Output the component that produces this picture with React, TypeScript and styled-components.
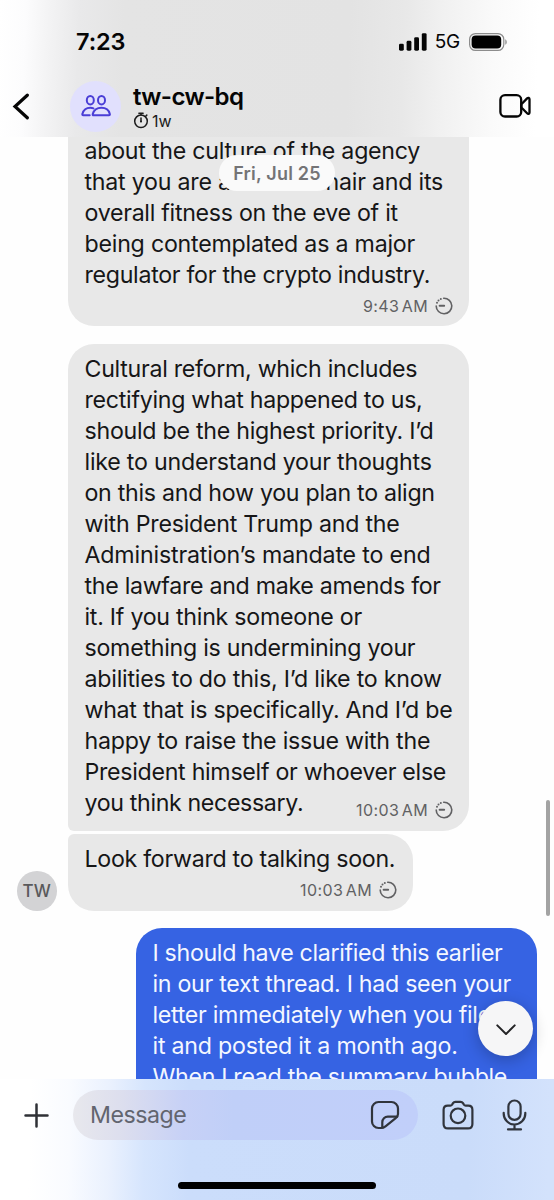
import React from "react";
import styled, { createGlobalStyle } from "styled-components";

const GlobalStyle = createGlobalStyle`
  * { box-sizing: border-box; }
  body { margin: 0; background: #fff; }
`;

const Screen = styled.main`
  position: relative;
  display: flex;
  flex-direction: column;
  width: 554px;
  height: 1200px;
  overflow: hidden;
  background: #fefefe;
  color: #161617;
  font-family: Inter, "Liberation Sans", sans-serif;
`;

const Header = styled.header`
  flex: none;
  height: 137px;
  background: linear-gradient(
    92deg,
    #ffffff 0,
    #fcfcfd 26px,
    #f3f3f4 50px,
    #e9e9ea 80px,
    #e4e4e4 125px,
    #e3e3e3 350px,
    #e8e8e8 405px,
    #f1f1f1 445px,
    #fafafa 495px,
    #ffffff 540px
  );
  color: #050505;
`;

const StatusBar = styled.div`
  display: flex;
  align-items: center;
  height: 56px;
  padding: 27px 46px 0 76px;
`;

const Clock = styled.time`
  flex: 1;
  font-size: 23.5px;
  font-weight: 600;
  line-height: 29px;
  letter-spacing: -0.1px;
`;

const Network = styled.span`
  margin: 0 9px 0 8px;
  font-size: 19px;
  font-weight: 400;
  line-height: 29px;
  letter-spacing: -0.2px;
`;

const TitleBar = styled.div`
  display: flex;
  align-items: center;
  height: 81px;
  padding: 19px 22px 0 12px;
`;

const GroupAvatar = styled.div`
  display: flex;
  align-items: center;
  justify-content: center;
  width: 51px;
  height: 51px;
  margin-left: 40px;
  border-radius: 50%;
  background: #e1e0fd;
`;

const TitleText = styled.div`
  flex: 1;
  margin-left: 12px;
`;

const GroupName = styled.h1`
  margin: 0;
  font-size: 24px;
  font-weight: 600;
  line-height: 30px;
  letter-spacing: -0.6px;
`;

const Expiry = styled.div`
  display: flex;
  align-items: center;
  gap: 3px;
  margin-top: -1px;
  font-size: 16px;
  line-height: 20px;
  color: #1c1c1c;
`;

const Conversation = styled.section`
  position: relative;
  flex: none;
  height: 942px;
  padding-left: 17px;
  overflow: hidden;
`;

const DatePill = styled.div`
  position: absolute;
  top: 18px;
  left: 219px;
  display: flex;
  align-items: center;
  justify-content: center;
  width: 116px;
  height: 36px;
  border-radius: 18px;
  background: #fafafa;
  color: #747476;
  font-size: 18px;
  font-weight: 600;
  letter-spacing: 0.2px;
`;

const Row = styled.div<{ $gap: number }>`
  display: flex;
  align-items: flex-end;
  margin-top: ${(p) => p.$gap}px;
`;

const AvatarSlot = styled.div`
  flex: none;
  width: 51px;
`;

const SenderAvatar = styled.div`
  display: flex;
  align-items: center;
  justify-content: center;
  width: 39.5px;
  height: 39.5px;
  border-radius: 50%;
  background: #d3d3d5;
  color: #59595b;
  font-size: 17px;
  font-weight: 450;
  letter-spacing: 0.2px;
`;

const Bubble = styled.div<{ $width: number; $radius: string; $sent?: boolean }>`
  width: ${(p) => p.$width}px;
  margin-left: ${(p) => (p.$sent ? "119px" : "0")};
  padding: 10px 16px 10.5px 16.5px;
  border-radius: ${(p) => p.$radius};
  background: ${(p) => (p.$sent ? "#3663e3" : "#e8e8e8")};
  color: ${(p) => (p.$sent ? "#f4f7ff" : "#161617")};
`;

const Line = styled.div<{ $track: number }>`
  font-size: 23.2px;
  line-height: 31px;
  letter-spacing: ${(p) => p.$track - 0.025}px;
  white-space: nowrap;
`;

const Meta = styled.div`
  display: flex;
  align-items: center;
  justify-content: flex-end;
  gap: 7px;
  height: 20px;
  margin-top: 5px;
  color: #616163;
  font-size: 16px;
  line-height: 20px;
  letter-spacing: 0.4px;
  word-spacing: -2.5px;
  white-space: nowrap;
`;

const LastLine = styled.div`
  display: flex;
  justify-content: space-between;
  align-items: flex-end;
  height: 32px;

  ${Line} {
    align-self: flex-start;
  }
`;

const ScrollThumb = styled.div`
  position: absolute;
  top: 663px;
  right: 4px;
  width: 4.5px;
  height: 116px;
  border-radius: 3px;
  background: #a3a3a3;
`;

const ScrollDown = styled.button`
  position: absolute;
  top: 864px;
  left: 478px;
  display: flex;
  align-items: center;
  justify-content: center;
  width: 55px;
  height: 55px;
  padding: 0;
  border: 0;
  border-radius: 50%;
  background: #f6f6f7;
  box-shadow: 0 4px 16px rgba(0, 0, 0, 0.24);
`;

const Composer = styled.footer`
  flex: 1;
  display: flex;
  flex-direction: column;
  align-items: stretch;
  justify-content: space-between;
  padding: 11px 27px 11px 24px;
  background: linear-gradient(
    91deg,
    #ffffff 30px,
    #f9fbff 70px,
    #eaf1fe 110px,
    #d6e5fd 145px,
    #cbddfb 190px,
    #cadcfa 470px,
    #d3e2fc 550px
  );
`;

const ComposerRow = styled.div`
  display: flex;
  align-items: center;
  height: 50px;
`;

const MessageField = styled.div`
  display: flex;
  align-items: center;
  justify-content: space-between;
  width: 345px;
  height: 50px;
  margin: 0 24px;
  padding: 0 18px 0 17px;
  border-radius: 25px;
  background: linear-gradient(90deg, #e8e8ed 0, #dcdeee 50px, #c7d1f6 110px, #c0cff8 160px, #c1cffa 100%);
  color: #62656f;
  font-size: 23.2px;
  letter-spacing: -0.5px;
`;

const CameraSlot = styled.div`
  display: flex;
  margin-right: 28px;
`;

const HomeIndicator = styled.div`
  width: 198px;
  height: 7px;
  margin-left: 154px;
  border-radius: 4px;
  background: #000;
`;

const SignalIcon = () => (
  <svg width="28" height="18" viewBox="0 0 28 18" fill="#050505">
    <rect x="0" y="10.7" width="4.8" height="7" rx="1.4" />
    <rect x="7.6" y="7.8" width="4.8" height="9.9" rx="1.4" />
    <rect x="15.2" y="4.2" width="4.8" height="13.5" rx="1.4" />
    <rect x="22.8" y="0.2" width="4.8" height="17.5" rx="1.4" />
  </svg>
);

const BatteryIcon = () => (
  <svg width="39" height="18" viewBox="0 0 39 18" fill="none">
    <rect x="0.6" y="0.6" width="34.2" height="16.8" rx="5.8" stroke="#8c8c8c" strokeWidth="1.2" />
    <rect x="2.6" y="2.6" width="29.6" height="12.8" rx="4" fill="#000" />
    <path d="M36.3 6.2c1.9 1 1.9 4.6 0 5.6z" fill="#8c8c8c" />
  </svg>
);

const BackIcon = () => (
  <svg width="18" height="27" viewBox="0 0 18 27" fill="none">
    <path d="M15.3 2.2 3 13.5l12.3 11.3" stroke="#050505" strokeWidth="3.2" strokeLinecap="round" strokeLinejoin="miter" />
  </svg>
);

const GroupIcon = () => (
  <svg width="30" height="24" viewBox="0 0 30 24" fill="none" stroke="#4a3ed6" strokeWidth="2" strokeLinejoin="round" strokeLinecap="round">
    <ellipse cx="9.3" cy="6.2" rx="3.5" ry="4.3" />
    <ellipse cx="20.5" cy="6.2" rx="3.5" ry="4.3" />
    <path d="M12.6 21.3c-.8 0-1.100-.5-.8-1.400 1.100-3.500 4.400-6.100 8.600-6.100s7.500 2.600 8.400 6.100c.2.900-.1 1.400-.9 1.400z" />
    <path d="M8.7 21.3H2.300c-.8 0-1.200-.5-.9-1.400 1-3.500 4-6.100 7.900-6.100 1.200 0 2.200.2 3.200.6" />
  </svg>
);

const TimerIcon = () => (
  <svg width="16" height="17" viewBox="0 0 16 17" fill="none" stroke="#1c1c1c" strokeWidth="1.5" strokeLinecap="round">
    <circle cx="8" cy="9.3" r="6.3" />
    <path d="M8 3V1.3M5.9 1.3h4.2M12.7 4.2l1.1-1.1M8 6v3.5" />
    <circle cx="8" cy="9.5" r="1" fill="#1c1c1c" stroke="none" />
  </svg>
);

const VideoIcon = () => (
  <svg width="33" height="26" viewBox="0 0 33 26" fill="none" stroke="#050505" strokeWidth="2.3" strokeLinejoin="round">
    <rect x="1.4" y="2.2" width="20.8" height="21.3" rx="4.6" />
    <path d="M22.4 11.200l5.700-5.800c1.100-1.100 2.400-.6 2.400.9v13.100c0 1.500-1.300 2-2.400.9l-5.700-5.800z" />
  </svg>
);

const DisappearingIcon = () => (
  <svg width="18" height="18" viewBox="0 0 18 18" fill="none" stroke="#616163" strokeWidth="1.6" strokeLinecap="round">
    <path d="M8.7 1.2a7.8 7.8 0 1 1-7.5 7.8" />
    <path d="M4.6 8.8h4.600" strokeWidth="1.9" />
    <g fill="#616163" stroke="none">
      <circle cx="2" cy="5.8" r="1" />
      <circle cx="3.5" cy="3.5" r="1" />
      <circle cx="5.8" cy="1.9" r="1" />
    </g>
  </svg>
);

const ChevronDownIcon = () => (
  <svg width="20" height="12" viewBox="0 0 20 12" fill="none" stroke="#242426" strokeWidth="2" strokeLinecap="round" strokeLinejoin="round">
    <path d="M1.3 2.4 10 11 18.7 2.4" />
  </svg>
);

const PlusIcon = () => (
  <svg width="25" height="25" viewBox="0 0 25 25" stroke="#2f3136" strokeWidth="2.5" strokeLinecap="round">
    <path d="M12.5 1.5v22M1.5 12.5h22" />
  </svg>
);

const StickerIcon = () => (
  <svg width="30" height="30" viewBox="0 0 30 30" fill="none" stroke="#30343c" strokeWidth="2.2" strokeLinejoin="round" strokeLinecap="round">
    <path d="M11 28H8.500a6.500 6.500 0 0 1-6.500-6.500V8.500A6.500 6.500 0 0 1 8.500 2h13a6.500 6.500 0 0 1 6.500 6.500v5.500c0 1.800-.7 3-2.300 4.200L15.500 26.300c-1.500 1.200-2.700 1.700-4.500 1.700z" />
    <path d="M12.300 27.500v-5.300a5.500 5.500 0 0 1 5.500-5.500h9.300" />
  </svg>
);

const CameraIcon = () => (
  <svg width="32" height="30" viewBox="0 0 32 30" fill="none" stroke="#30343c" strokeWidth="2.2" strokeLinejoin="round">
    <path d="M5.800 5.600h2.500c.8 0 1.300-.3 1.800-1l.9-1.400c.6-.9 1.300-1.300 2.400-1.300h5.200c1.100 0 1.800.4 2.400 1.300l.9 1.400c.5.700 1 1 1.800 1h2.500c2.700 0 4.200 1.600 4.200 4.200v14.100c0 2.900-1.600 4.500-4.500 4.500H6.100c-2.900 0-4.500-1.600-4.500-4.500V9.800c0-2.600 1.500-4.200 4.200-4.200z" />
    <circle cx="16" cy="15.800" r="7.300" />
  </svg>
);

const MicIcon = () => (
  <svg width="25" height="32" viewBox="0 0 25 32" fill="none" stroke="#30343c" strokeWidth="2.2" strokeLinecap="round">
    <rect x="6.4" y="1.5" width="12.2" height="19.4" rx="6.1" />
    <path d="M1.7 13.8v.9a10.8 10.8 0 0 0 21.6 0v-.9M12.5 25.5v4.4M6 30.4h13" />
  </svg>
);

type TextLine = [text: string, track: number];

const cultureLines: TextLine[] = [
  ["about the culture of the agency", -0.229],
  ["that you are about to chair and its", -0.21],
  ["overall fitness on the eve of it", -0.26],
  ["being contemplated as a major", -0.205],
  ["regulator for the crypto industry.", -0.269],
];

const reformLines: TextLine[] = [
  ["Cultural reform, which includes", -0.264],
  ["rectifying what happened to us,", -0.258],
  ["should be the highest priority. I’d", -0.245],
  ["like to understand your thoughts", -0.2],
  ["on this and how you plan to align", -0.259],
  ["with President Trump and the", -0.215],
  ["Administration’s mandate to end", -0.144],
  ["the lawfare and make amends for", -0.276],
  ["it. If you think someone or", -0.239],
  ["something is undermining your", -0.242],
  ["abilities to do this, I’d like to know", -0.205],
  ["what that is specifically. And I’d be", -0.258],
  ["happy to raise the issue with the", -0.23],
  ["President himself or whoever else", -0.267],
];

const replyLines: TextLine[] = [
  ["I should have clarified this earlier", -0.3],
  ["in our text thread. I had seen your", -0.269],
  ["letter immediately when you filed", -0.26],
  ["it and posted it a month ago.", -0.208],
  ["When I read the summary bubble", -0.286],
];

const Lines = ({ lines }: { lines: TextLine[] }) => (
  <>
    {lines.map(([text, track]) => (
      <Line key={text} $track={track}>
        {text}
      </Line>
    ))}
  </>
);

const SentAt = ({ time }: { time: string }) => (
  <Meta>
    <span>{time}</span>
    <DisappearingIcon />
  </Meta>
);

export default function App() {
  return (
    <Screen>
      <GlobalStyle />
      <Header>
        <StatusBar>
          <Clock>7:23</Clock>
          <SignalIcon />
          <Network>5G</Network>
          <BatteryIcon />
        </StatusBar>
        <TitleBar>
          <BackIcon />
          <GroupAvatar>
            <GroupIcon />
          </GroupAvatar>
          <TitleText>
            <GroupName>tw-cw-bq</GroupName>
            <Expiry>
              <TimerIcon />
              <span>1w</span>
            </Expiry>
          </TitleText>
          <VideoIcon />
        </TitleBar>
      </Header>

      <Conversation>
        <Row $gap={-11.5}>
          <AvatarSlot />
          <Bubble $width={401} $radius="0 0 26px 26px">
            <Lines lines={cultureLines} />
            <SentAt time="9:43 AM" />
          </Bubble>
        </Row>
        <Row $gap={18}>
          <AvatarSlot />
          <Bubble $width={401} $radius="26px 26px 26px 6px">
            <Lines lines={reformLines} />
            <LastLine>
              <Line $track={-0.33}>you think necessary.</Line>
              <SentAt time="10:03 AM" />
            </LastLine>
          </Bubble>
        </Row>
        <Row $gap={3.5}>
          <AvatarSlot>
            <SenderAvatar>TW</SenderAvatar>
          </AvatarSlot>
          <Bubble $width={345} $radius="6px 26px 26px 26px">
            <Line $track={-0.272}>Look forward to talking soon.</Line>
            <SentAt time="10:03 AM" />
          </Bubble>
        </Row>
        <Row $gap={17.5}>
          <Bubble $width={401} $radius="26px 26px 0 0" $sent>
            <Lines lines={replyLines} />
          </Bubble>
        </Row>
        <DatePill>Fri, Jul 25</DatePill>
        <ScrollThumb />
        <ScrollDown aria-label="Scroll to latest">
          <ChevronDownIcon />
        </ScrollDown>
      </Conversation>

      <Composer>
        <ComposerRow>
          <PlusIcon />
          <MessageField>
            <span>Message</span>
            <StickerIcon />
          </MessageField>
          <CameraSlot>
            <CameraIcon />
          </CameraSlot>
          <MicIcon />
        </ComposerRow>
        <HomeIndicator />
      </Composer>
    </Screen>
  );
}
